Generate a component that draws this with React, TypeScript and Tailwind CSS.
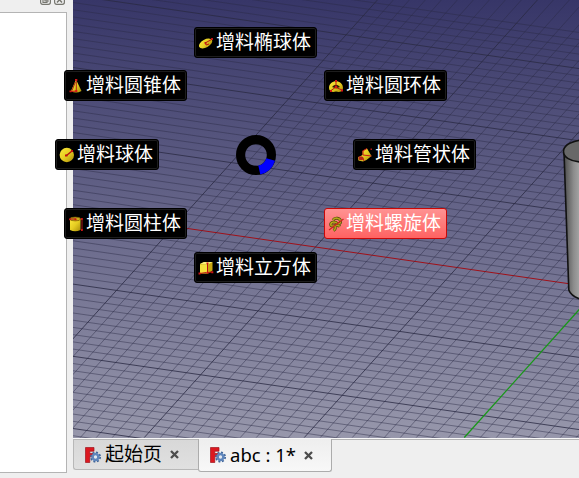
import React from "react";

const MINOR_Y = 7.22;
const MINOR_X = 16;
const SHALLOW = 0.1448;
const STEEP = 1.113;

const shallowLines = Array.from({ length: 75 }, (_, k) => k - 35);
const steepLines = Array.from({ length: 70 }, (_, k) => k - 30);

function Viewport() {
  return (
    <svg className="block h-[438px] w-[506px]" viewBox="73 0 506 438">
      <defs>
        <linearGradient id="sky" x1="0" y1="0" x2="0" y2="1">
          <stop offset="0" stopColor="#373668" />
          <stop offset="1" stopColor="#9797ab" />
        </linearGradient>
        <linearGradient id="metal" x1="0" y1="0" x2="1" y2="0">
          <stop offset="0" stopColor="#4c4c4c" />
          <stop offset="0.6" stopColor="#8c8c8c" />
          <stop offset="1" stopColor="#a6a6a6" />
        </linearGradient>
      </defs>
      <rect x="73" y="0" width="506" height="438" fill="url(#sky)" />
      <g fill="none">
        {shallowLines.map((k) => {
          const y = 211.9 + k * MINOR_Y;
          return (
            <line key={k} x1={73} y1={y} x2={579} y2={y + 506 * SHALLOW}
              stroke={k === 0 ? "#a01018" : "#2a2a44"}
              strokeOpacity={k === 0 ? 1 : k % 10 === 0 ? 0.8 : 0.45} />
          );
        })}
        {steepLines.map((k) => {
          const x = 464.3 + k * MINOR_X;
          return (
            <line key={k} x1={x} y1={437.5} x2={x + 437.5 / STEEP} y2={0}
              stroke={k === 0 ? "#189818" : "#2a2a44"}
              strokeWidth={k === 0 ? 1.3 : 1}
              strokeOpacity={k === 0 ? 1 : k % 10 === 0 ? 0.8 : 0.45} />
          );
        })}
      </g>
      <path d="M564 152 L568.8 290 Q571 296 580 299 V150Z" fill="url(#metal)" stroke="#111" strokeWidth="1.6" />
      <path d="M581 140 C569 142 563.5 146 563.5 151.500 C563.5 157 570 161.500 581 162Z" fill="#686868" stroke="#111" strokeWidth="1.6" />
    </svg>
  );
}

type Shape = "ellipsoid" | "cone" | "torus" | "sphere" | "tube" | "cylinder" | "helix" | "box";

function ShapeIcon({ shape }: { shape: Shape }) {
  return (
    <svg className="h-4 w-4 shrink-0" viewBox="0 0 16 16" fill="none">
      <defs>
        <linearGradient id="gold" x1="0" y1="0" x2="1" y2="1">
          <stop offset="0" stopColor="#fbe83a" />
          <stop offset="0.5" stopColor="#e6cd22" />
          <stop offset="1" stopColor="#a98c08" />
        </linearGradient>
      </defs>
      {shape === "ellipsoid" && (
        <>
          <ellipse cx="7.600" cy="8.500" rx="7.200" ry="4" transform="rotate(-28 7.600 8.500)" fill="url(#gold)" />
          <path d="M14.500 4 L8 7.500 M7.500 7.500 L8 10 L11 9" stroke="#c01414" strokeWidth="1" />
          <path d="M13 3h2v2h-2z M6.500 7h2v1.800h-2z" fill="#c01414" />
        </>
      )}
      {shape === "cone" && (
        <>
          <path d="M8 1.500 L13.500 13 Q8 16 3 13Z" fill="url(#gold)" />
          <path d="M8.300 3 V12.500 M7.400 4 L4 12.500" stroke="#a81414" strokeWidth=".9" />
          <path d="M2 13.500 L9 13" stroke="#c81414" strokeWidth="1.200" />
          <path d="M7 1h2.300v2H7z M7.300 12h2v2h-2z M1.500 12.500h2v1.800h-2z" fill="#d41616" />
        </>
      )}
      {shape === "torus" && (
        <>
          <path d="M1 10 C1 1 15 1 15 10 C15 14 11 14.500 8 13.500 C5 14.500 1 14 1 10Z" fill="url(#gold)" />
          <path d="M4 9 Q8 4.500 12 9 L8 10.500Z" fill="#241d04" />
          <path d="M8 3 V9 L3 12.500 M8 9.500 L14 12" stroke="#b81414" strokeWidth="1" />
          <path d="M7 2h2v2H7z M6.800 8h2.400v2H6.800z M2 12h2v2H2z M13 11.500h2v2h-2z" fill="#d41616" />
        </>
      )}
      {shape === "sphere" && (
        <>
          <circle cx="7.800" cy="8" r="7.200" fill="url(#gold)" />
          <path d="M7.500 8.500 L13 4" stroke="#b01010" strokeWidth="1.300" />
          <path d="M6 7.500h2.500v2H6z M12 3h2v2h-2z" fill="#c01010" />
        </>
      )}
      {shape === "tube" && (
        <>
          <path d="M5.500 4 L10 1.500 L14.500 9 L9.500 13 L6 14.500 L1.500 13.500 L1 10.500 L5.500 8Z" fill="url(#gold)" />
          <path d="M5.500 4 L10 1.500 M6 4 V8 L14.500 9 M1.500 10 L5.500 10 L7 14" stroke="#c81919" strokeWidth="1" />
          <ellipse cx="4" cy="11.500" rx="2.600" ry="1.800" fill="#b0291a" />
          <path d="M13.500 1.500h1.500v1.500h-1.500z" fill="#b51919" />
        </>
      )}
      {shape === "cylinder" && (
        <>
          <path d="M2 3 V14 Q7 16.500 12.500 14 V3Z" fill="url(#gold)" />
          <ellipse cx="7.200" cy="3" rx="5.300" ry="1.900" fill="#c9a81a" stroke="#7c5c00" strokeWidth=".7" />
          <path d="M2 3 H8 M14 4 V14" stroke="#a81414" strokeWidth="1" />
          <path d="M13 2h1.800v2H13z M13 13h1.800v2H13z M6.500 2.500h2v1.800h-2z M1 2.500h1.800v1.800H1z" fill="#cc1414" />
        </>
      )}
      {shape === "helix" && (
        <>
          <path d="M5 4 C7 1 12 2 12.500 5 C13 8 10 8.500 8 6.500 C5 5 2 7 3 9.500 C4.500 11.500 9 7.500 12 10.500 M5.500 10 C8 10 8 13 5.500 14.500" stroke="#4f4a0a" strokeWidth="3" />
          <path d="M5 4 C7 1 12 2 12.500 5 C13 8 10 8.500 8 6.500 C5 5 2 7 3 9.500 C4.500 11.500 9 7.500 12 10.500 M5.500 10 C8 10 8 13 5.500 14.500" stroke="#b5a51c" strokeWidth="1.600" />
          <path d="M1 14 L15.500 3" stroke="#d02020" strokeWidth="1.200" />
        </>
      )}
      {shape === "box" && (
        <>
          <path d="M2 4 L6 2 H14.500 V10.500 L10 13.500 H2Z" fill="#c9a610" />
          <path d="M2 4.500 H9.500 V13.300 H2Z" fill="#f5e03c" />
          <path d="M2 4 L6 2 H14.500 L10 4.500Z" fill="#fbef7a" />
          <path d="M9.500 3 V12.500 M1.500 13.500 L8.500 12.500 M10 12.500 L14 12" stroke="#b81414" strokeWidth="1" />
          <path d="M8.500 2.500h2v1.800h-2z M8.500 11.700h2v2h-2z M0.500 12.500h2v2h-2z M13.300 11.300h2v2h-2z" fill="#cc1414" />
        </>
      )}
    </svg>
  );
}

const items: { label: string; shape: Shape; place: string; active?: boolean }[] = [
  { label: "增料椭球体", shape: "ellipsoid", place: "left-[194px] top-[27px] w-[123px]" },
  { label: "增料圆锥体", shape: "cone", place: "left-[64px] top-[70px] w-[123px]" },
  { label: "增料圆环体", shape: "torus", place: "left-[324px] top-[70px] w-[123px]" },
  { label: "增料球体", shape: "sphere", place: "left-[55px] top-[139px] w-[104px]" },
  { label: "增料管状体", shape: "tube", place: "left-[353px] top-[139px] w-[123px]" },
  { label: "增料圆柱体", shape: "cylinder", place: "left-[64px] top-[208px] w-[123px]" },
  { label: "增料螺旋体", shape: "helix", place: "left-[324px] top-[208px] w-[123px]", active: true },
  { label: "增料立方体", shape: "box", place: "left-[194px] top-[252px] w-[123px]" },
];

function PieMenu() {
  return (
    <>
      {items.map((item) => (
        <button
          key={item.label}
          className={`absolute flex h-[31px] items-center gap-[2px] rounded-[3px] border pl-[3px] text-[19px] leading-[28px] whitespace-nowrap text-white ${item.place} ${
            item.active
              ? "border-[#c80808] bg-linear-to-b from-[#ff9292] to-[#ff6262]"
              : "border-black bg-black shadow-[inset_0_0_0_1px_#1d1d1d]"
          }`}
        >
          <ShapeIcon shape={item.shape} />
          <span className="pb-[2px]">{item.label}</span>
        </button>
      ))}
      <svg className="absolute left-[236px] top-[135px] h-10 w-10" viewBox="-20 -20 40 40" fill="none" strokeWidth="9.200">
        <circle r="15.400" stroke="#000" />
        <path d="M14.700 4.500 A15.400 15.400 0 0 1 3.300 15" stroke="#0000ff" />
      </svg>
    </>
  );
}

function AppIcon() {
  return (
    <svg className="h-4 w-4 shrink-0" viewBox="0 0 16 16">
      <path d="M.5 .5 H9 V4.200 H4.800 V6.500 H8 V9.800 H4.800 V15.500 H.5Z" fill="#dc1820" stroke="#9e1820" strokeWidth=".7" />
      <circle cx="10.500" cy="10" r="4.600" fill="none" stroke="#3f6499" strokeWidth="1.800" strokeDasharray="1.900 1.713" />
      <circle cx="10.500" cy="10" r="2.900" fill="#e4e9f0" stroke="#5f86bc" strokeWidth="2.500" />
    </svg>
  );
}

function CloseMark() {
  return (
    <svg className="h-[9px] w-[9px] shrink-0" viewBox="0 0 9 9">
      <path d="M1 1 L8 8 M8 1 L1 8" stroke="#4c4c4c" strokeWidth="2.300" />
    </svg>
  );
}

function DockButton({ close }: { close?: boolean }) {
  return (
    <svg className="h-[5px] w-[11px]" viewBox="0 6 11 5" fill="none" stroke="#777770">
      <rect x=".6" y=".5" width="9.800" height="9.800" rx="2" strokeWidth="1.200" />
      {close ? <path d="M3 3 L8 8.500 M8 3 L3 8.500" strokeWidth="1.500" /> : <path d="M3 5v3.500h4V5 M5 3v4h4" strokeWidth="1.200" />}
    </svg>
  );
}

export default function App() {
  return (
    <div className="relative flex h-[478px] w-[579px] overflow-hidden bg-[#efefef] font-['Noto_Sans','Noto_Sans_CJK_SC',sans-serif]">
      <aside className="flex w-[73px] flex-col">
        <div className="flex h-3 gap-[3px] pl-10">
          <DockButton />
          <DockButton close />
        </div>
        <div className="h-[461px] w-[67px] border-y border-r border-[#b4b4b4] bg-white" />
      </aside>
      <main className="flex w-[506px] flex-col">
        <Viewport />
        <div className="flex h-10 items-start border-t border-[#f8f8f8]">
          <div className="flex h-[31px] w-[125px] items-center rounded-bl-[3px] border-y border-l border-[#b8b8b8] bg-linear-to-b from-[#d8d8d8] to-[#e0e0e0] pl-[11px] text-[19px] leading-[28px] text-black">
            <AppIcon />
            <span className="ml-1 w-[57px] whitespace-nowrap pb-px">起始页</span>
            <span className="ml-[8px]"><CloseMark /></span>
          </div>
          <div className="flex h-[33px] w-[134px] items-center rounded-b-[3px] border-x border-b border-[#acacac] bg-linear-to-b from-[#eeeeee] to-[#f8f8f8] pl-[11px] text-[18.5px] leading-[28px] text-black">
            <AppIcon />
            <span className="ml-1 w-[66px] whitespace-nowrap">abc : 1*</span>
            <span className="ml-[8px]"><CloseMark /></span>
          </div>
          <div className="h-px flex-1 bg-[#b5b5b5]" />
        </div>
      </main>
      <PieMenu />
    </div>
  );
}
